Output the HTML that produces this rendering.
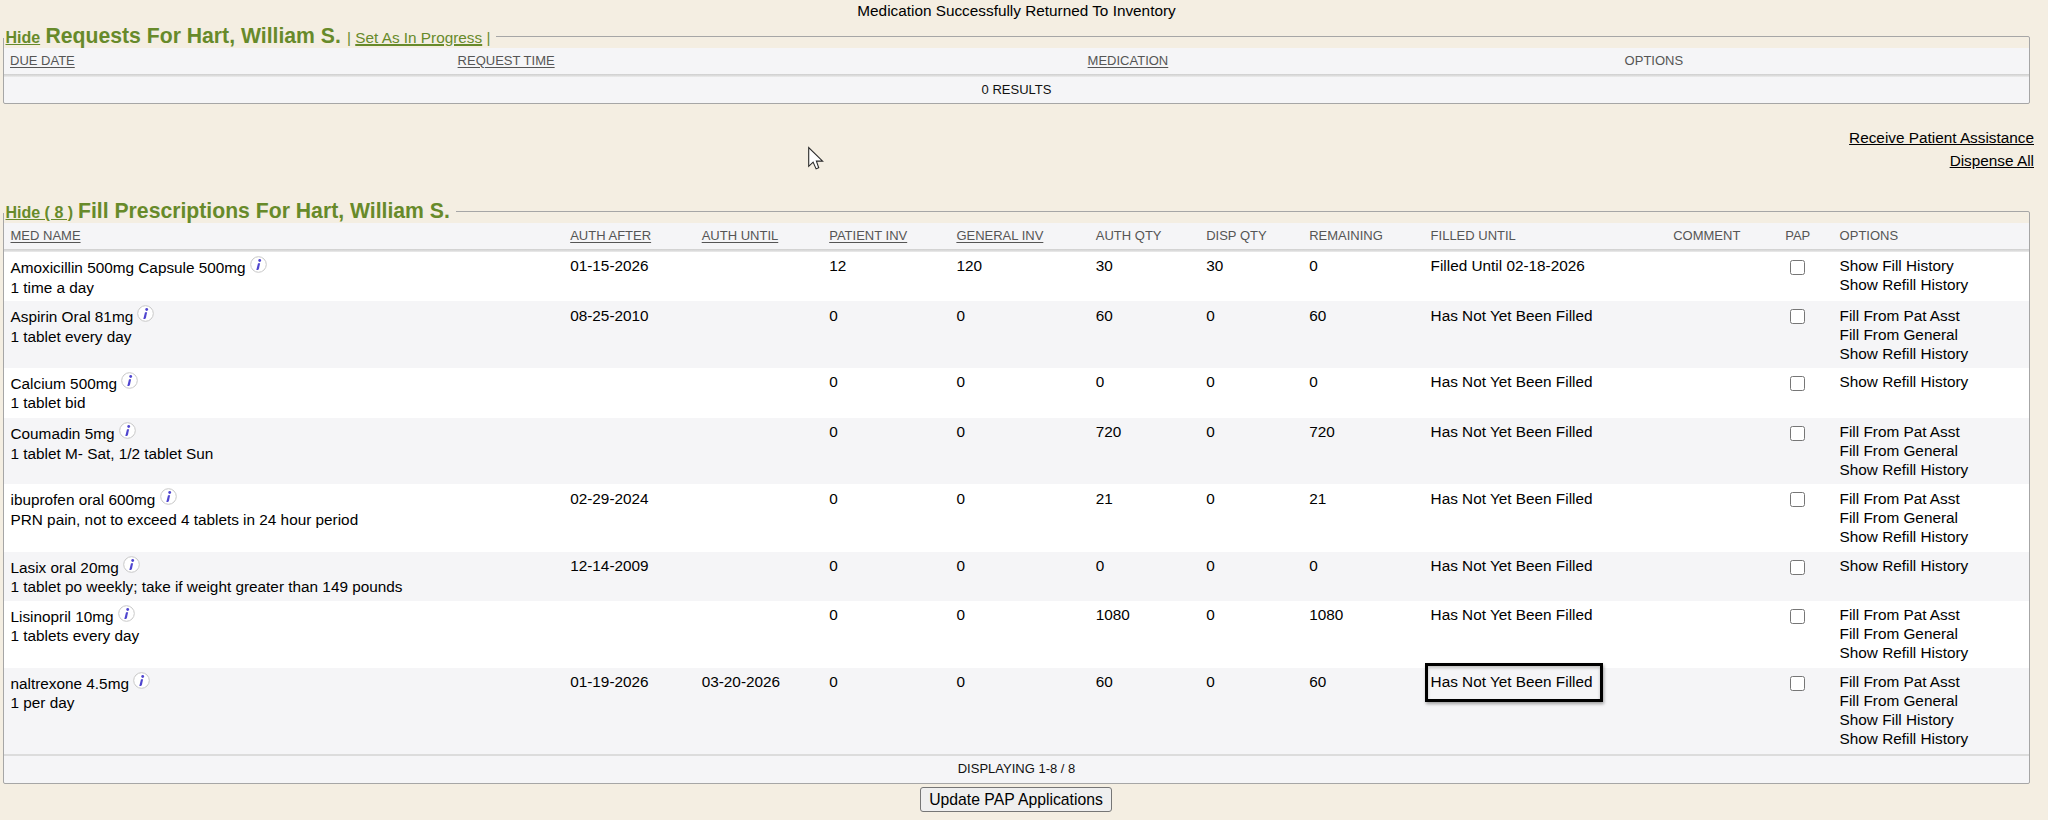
<!DOCTYPE html>
<html><head><meta charset="utf-8"><style>
html,body{margin:0;padding:0;}
body{width:2048px;height:820px;background:#f4eee2;position:relative;overflow:hidden;font-family:"Liberation Sans",sans-serif;}
.t{position:absolute;z-index:5;white-space:nowrap;font-family:"Liberation Sans",sans-serif;}
.r{position:absolute;box-sizing:content-box;}
.ic{display:block;}
.fs{position:absolute;z-index:3;border:1px solid #a6a6a6;border-radius:2px;box-sizing:border-box;}
.cb{width:13px;height:13px;border:1px solid #767676;border-radius:2.5px;background:#fff;}
.btn{position:absolute;border:1px solid #767676;border-radius:3px;background:#efefef;}
</style></head><body>
<div class="t" style="left:0px;top:1.00px;font-size:15.33px;line-height:19px;color:#000000;width:2033px;text-align:center;">Medication Successfully Returned To Inventory</div>
<div class="t" style="left:5.5px;top:28.10px;font-size:16px;line-height:20px;color:#678a2a;font-weight:bold;text-decoration:underline;">Hide</div>
<div class="t" style="left:45.5px;top:24.10px;font-size:21.2px;line-height:24px;color:#678a2a;font-weight:bold;">Requests For Hart, William S.</div>
<div class="t" style="left:347px;top:27.60px;font-size:15.33px;line-height:19px;color:#678a2a;">| <u style="text-decoration-thickness:1.5px">Set As In Progress</u> |</div>
<div class="r" style="left:4px;top:48px;width:2025px;height:26px;background:#f5f5f7;"></div>
<div class="r" style="left:4px;top:74px;width:2025px;height:3px;background:linear-gradient(#cfcfcf,#d9d9d9 45%,#ececec);"></div>
<div class="r" style="left:4px;top:77px;width:2025px;height:26px;background:#f5f5f7;"></div>
<div class="t" style="left:10px;top:52.50px;font-size:13px;line-height:16px;color:#555555;text-decoration:underline;text-underline-offset:2px;">DUE DATE</div>
<div class="t" style="left:457.6px;top:52.50px;font-size:13px;line-height:16px;color:#555555;text-decoration:underline;text-underline-offset:2px;">REQUEST TIME</div>
<div class="t" style="left:1087.6px;top:52.50px;font-size:13px;line-height:16px;color:#555555;text-decoration:underline;text-underline-offset:2px;">MEDICATION</div>
<div class="t" style="left:1624.6px;top:52.50px;font-size:13px;line-height:16px;color:#555555;">OPTIONS</div>
<div class="t" style="left:4px;top:82.00px;font-size:13px;line-height:16px;color:#111;width:2025px;text-align:center;">0 RESULTS</div>
<div class="t" style="left:1000px;top:127.80px;font-size:15.33px;line-height:19px;color:#000000;text-decoration:underline;width:1034px;text-align:right;">Receive Patient Assistance</div>
<div class="t" style="left:1000px;top:151.00px;font-size:15.33px;line-height:19px;color:#000000;text-decoration:underline;width:1034px;text-align:right;">Dispense All</div>
<div class="t" style="left:5.5px;top:203.00px;font-size:16px;line-height:20px;color:#678a2a;font-weight:bold;text-decoration:underline;">Hide ( 8 )</div>
<div class="t" style="left:78px;top:199.10px;font-size:21.2px;line-height:24px;color:#678a2a;font-weight:bold;">Fill Prescriptions For Hart, William S.</div>
<div class="r" style="left:4px;top:223px;width:2025px;height:26px;background:#f5f5f7;"></div>
<div class="r" style="left:4px;top:249px;width:2025px;height:3px;background:linear-gradient(#cfcfcf,#d9d9d9 45%,#ececec);"></div>
<div class="t" style="left:10.5px;top:227.50px;font-size:13px;line-height:16px;color:#555555;text-decoration:underline;text-underline-offset:2px;">MED NAME</div>
<div class="t" style="left:570.2px;top:227.50px;font-size:13px;line-height:16px;color:#555555;text-decoration:underline;text-underline-offset:2px;">AUTH AFTER</div>
<div class="t" style="left:701.7px;top:227.50px;font-size:13px;line-height:16px;color:#555555;text-decoration:underline;text-underline-offset:2px;">AUTH UNTIL</div>
<div class="t" style="left:829.2px;top:227.50px;font-size:13px;line-height:16px;color:#555555;text-decoration:underline;text-underline-offset:2px;">PATIENT INV</div>
<div class="t" style="left:956.4px;top:227.50px;font-size:13px;line-height:16px;color:#555555;text-decoration:underline;text-underline-offset:2px;">GENERAL INV</div>
<div class="t" style="left:1095.8px;top:227.50px;font-size:13px;line-height:16px;color:#555555;text-underline-offset:2px;">AUTH QTY</div>
<div class="t" style="left:1206.2px;top:227.50px;font-size:13px;line-height:16px;color:#555555;text-underline-offset:2px;">DISP QTY</div>
<div class="t" style="left:1309.2px;top:227.50px;font-size:13px;line-height:16px;color:#555555;text-underline-offset:2px;">REMAINING</div>
<div class="t" style="left:1430.6px;top:227.50px;font-size:13px;line-height:16px;color:#555555;text-underline-offset:2px;">FILLED UNTIL</div>
<div class="t" style="left:1673.2px;top:227.50px;font-size:13px;line-height:16px;color:#555555;text-underline-offset:2px;">COMMENT</div>
<div class="t" style="left:1785.2px;top:227.50px;font-size:13px;line-height:16px;color:#555555;text-underline-offset:2px;">PAP</div>
<div class="t" style="left:1839.6px;top:227.50px;font-size:13px;line-height:16px;color:#555555;text-underline-offset:2px;">OPTIONS</div>
<div class="r" style="left:4px;top:252px;width:2025px;height:49px;background:#ffffff;"></div>
<div class="t" style="left:10.5px;top:258.30px;font-size:15.33px;line-height:19px;color:#000000;">Amoxicillin 500mg Capsule 500mg</div>
<div class="r" style="left:249.8622px;top:256.19999999999993px;width:17px;height:17px"><svg class="ic" width="17" height="17" viewBox="0 0 17 17"><circle cx="8.5" cy="8.5" r="7.8" fill="#fff" stroke="#c8c8c8" stroke-width="1"/><circle cx="9.7" cy="4.5" r="1.4" fill="#4f45cf"/><path d="M8.0 7.2 L10.1 7.2 L8.9 12.9 L8.1 13.9 L6.3 13.9 Z" fill="#4f45cf"/></svg></div>
<div class="t" style="left:10.5px;top:277.50px;font-size:15.33px;line-height:19px;color:#000000;">1 time a day</div>
<div class="t" style="left:570.2px;top:256.40px;font-size:15.33px;line-height:19px;color:#000000;">01-15-2026</div>
<div class="t" style="left:829.2px;top:256.40px;font-size:15.33px;line-height:19px;color:#000000;">12</div>
<div class="t" style="left:956.4px;top:256.40px;font-size:15.33px;line-height:19px;color:#000000;">120</div>
<div class="t" style="left:1095.8px;top:256.40px;font-size:15.33px;line-height:19px;color:#000000;">30</div>
<div class="t" style="left:1206.2px;top:256.40px;font-size:15.33px;line-height:19px;color:#000000;">30</div>
<div class="t" style="left:1309.2px;top:256.40px;font-size:15.33px;line-height:19px;color:#000000;">0</div>
<div class="t" style="left:1430.6px;top:256.40px;font-size:15.33px;line-height:19px;color:#000000;">Filled Until 02-18-2026</div>
<div class="r cb" style="left:1790px;top:260px;"></div>
<div class="t" style="left:1839.6px;top:256.40px;font-size:15.33px;line-height:19px;color:#000000;">Show Fill History</div>
<div class="t" style="left:1839.6px;top:275.40px;font-size:15.33px;line-height:19px;color:#000000;">Show Refill History</div>
<div class="r" style="left:4px;top:301px;width:2025px;height:67px;background:#f5f5f7;"></div>
<div class="t" style="left:10.5px;top:307.43px;font-size:15.33px;line-height:19px;color:#000000;">Aspirin Oral 81mg</div>
<div class="r" style="left:137.378325px;top:305.3299999999999px;width:17px;height:17px"><svg class="ic" width="17" height="17" viewBox="0 0 17 17"><circle cx="8.5" cy="8.5" r="7.8" fill="#fff" stroke="#c8c8c8" stroke-width="1"/><circle cx="9.7" cy="4.5" r="1.4" fill="#4f45cf"/><path d="M8.0 7.2 L10.1 7.2 L8.9 12.9 L8.1 13.9 L6.3 13.9 Z" fill="#4f45cf"/></svg></div>
<div class="t" style="left:10.5px;top:326.63px;font-size:15.33px;line-height:19px;color:#000000;">1 tablet every day</div>
<div class="t" style="left:570.2px;top:305.53px;font-size:15.33px;line-height:19px;color:#000000;">08-25-2010</div>
<div class="t" style="left:829.2px;top:305.53px;font-size:15.33px;line-height:19px;color:#000000;">0</div>
<div class="t" style="left:956.4px;top:305.53px;font-size:15.33px;line-height:19px;color:#000000;">0</div>
<div class="t" style="left:1095.8px;top:305.53px;font-size:15.33px;line-height:19px;color:#000000;">60</div>
<div class="t" style="left:1206.2px;top:305.53px;font-size:15.33px;line-height:19px;color:#000000;">0</div>
<div class="t" style="left:1309.2px;top:305.53px;font-size:15.33px;line-height:19px;color:#000000;">60</div>
<div class="t" style="left:1430.6px;top:305.53px;font-size:15.33px;line-height:19px;color:#000000;">Has Not Yet Been Filled</div>
<div class="r cb" style="left:1790px;top:309.13px;"></div>
<div class="t" style="left:1839.6px;top:305.53px;font-size:15.33px;line-height:19px;color:#000000;">Fill From Pat Asst</div>
<div class="t" style="left:1839.6px;top:324.53px;font-size:15.33px;line-height:19px;color:#000000;">Fill From General</div>
<div class="t" style="left:1839.6px;top:343.53px;font-size:15.33px;line-height:19px;color:#000000;">Show Refill History</div>
<div class="r" style="left:4px;top:368px;width:2025px;height:50px;background:#ffffff;"></div>
<div class="t" style="left:10.5px;top:374.07px;font-size:15.33px;line-height:19px;color:#000000;">Calcium 500mg</div>
<div class="r" style="left:121.19559375000001px;top:371.9699999999999px;width:17px;height:17px"><svg class="ic" width="17" height="17" viewBox="0 0 17 17"><circle cx="8.5" cy="8.5" r="7.8" fill="#fff" stroke="#c8c8c8" stroke-width="1"/><circle cx="9.7" cy="4.5" r="1.4" fill="#4f45cf"/><path d="M8.0 7.2 L10.1 7.2 L8.9 12.9 L8.1 13.9 L6.3 13.9 Z" fill="#4f45cf"/></svg></div>
<div class="t" style="left:10.5px;top:393.27px;font-size:15.33px;line-height:19px;color:#000000;">1 tablet bid</div>
<div class="t" style="left:829.2px;top:372.17px;font-size:15.33px;line-height:19px;color:#000000;">0</div>
<div class="t" style="left:956.4px;top:372.17px;font-size:15.33px;line-height:19px;color:#000000;">0</div>
<div class="t" style="left:1095.8px;top:372.17px;font-size:15.33px;line-height:19px;color:#000000;">0</div>
<div class="t" style="left:1206.2px;top:372.17px;font-size:15.33px;line-height:19px;color:#000000;">0</div>
<div class="t" style="left:1309.2px;top:372.17px;font-size:15.33px;line-height:19px;color:#000000;">0</div>
<div class="t" style="left:1430.6px;top:372.17px;font-size:15.33px;line-height:19px;color:#000000;">Has Not Yet Been Filled</div>
<div class="r cb" style="left:1790px;top:375.77px;"></div>
<div class="t" style="left:1839.6px;top:372.17px;font-size:15.33px;line-height:19px;color:#000000;">Show Refill History</div>
<div class="r" style="left:4px;top:418px;width:2025px;height:66px;background:#f5f5f7;"></div>
<div class="t" style="left:10.5px;top:424.35px;font-size:15.33px;line-height:19px;color:#000000;">Coumadin 5mg</div>
<div class="r" style="left:118.64937656250001px;top:422.24999999999994px;width:17px;height:17px"><svg class="ic" width="17" height="17" viewBox="0 0 17 17"><circle cx="8.5" cy="8.5" r="7.8" fill="#fff" stroke="#c8c8c8" stroke-width="1"/><circle cx="9.7" cy="4.5" r="1.4" fill="#4f45cf"/><path d="M8.0 7.2 L10.1 7.2 L8.9 12.9 L8.1 13.9 L6.3 13.9 Z" fill="#4f45cf"/></svg></div>
<div class="t" style="left:10.5px;top:443.55px;font-size:15.33px;line-height:19px;color:#000000;">1 tablet M- Sat, 1/2 tablet Sun</div>
<div class="t" style="left:829.2px;top:422.45px;font-size:15.33px;line-height:19px;color:#000000;">0</div>
<div class="t" style="left:956.4px;top:422.45px;font-size:15.33px;line-height:19px;color:#000000;">0</div>
<div class="t" style="left:1095.8px;top:422.45px;font-size:15.33px;line-height:19px;color:#000000;">720</div>
<div class="t" style="left:1206.2px;top:422.45px;font-size:15.33px;line-height:19px;color:#000000;">0</div>
<div class="t" style="left:1309.2px;top:422.45px;font-size:15.33px;line-height:19px;color:#000000;">720</div>
<div class="t" style="left:1430.6px;top:422.45px;font-size:15.33px;line-height:19px;color:#000000;">Has Not Yet Been Filled</div>
<div class="r cb" style="left:1790px;top:426.05px;"></div>
<div class="t" style="left:1839.6px;top:422.45px;font-size:15.33px;line-height:19px;color:#000000;">Fill From Pat Asst</div>
<div class="t" style="left:1839.6px;top:441.45px;font-size:15.33px;line-height:19px;color:#000000;">Fill From General</div>
<div class="t" style="left:1839.6px;top:460.45px;font-size:15.33px;line-height:19px;color:#000000;">Show Refill History</div>
<div class="r" style="left:4px;top:484px;width:2025px;height:68px;background:#ffffff;"></div>
<div class="t" style="left:10.5px;top:490.43px;font-size:15.33px;line-height:19px;color:#000000;">ibuprofen oral 600mg</div>
<div class="r" style="left:159.56610468749997px;top:488.3299999999999px;width:17px;height:17px"><svg class="ic" width="17" height="17" viewBox="0 0 17 17"><circle cx="8.5" cy="8.5" r="7.8" fill="#fff" stroke="#c8c8c8" stroke-width="1"/><circle cx="9.7" cy="4.5" r="1.4" fill="#4f45cf"/><path d="M8.0 7.2 L10.1 7.2 L8.9 12.9 L8.1 13.9 L6.3 13.9 Z" fill="#4f45cf"/></svg></div>
<div class="t" style="left:10.5px;top:509.63px;font-size:15.33px;line-height:19px;color:#000000;">PRN pain, not to exceed 4 tablets in 24 hour period</div>
<div class="t" style="left:570.2px;top:488.53px;font-size:15.33px;line-height:19px;color:#000000;">02-29-2024</div>
<div class="t" style="left:829.2px;top:488.53px;font-size:15.33px;line-height:19px;color:#000000;">0</div>
<div class="t" style="left:956.4px;top:488.53px;font-size:15.33px;line-height:19px;color:#000000;">0</div>
<div class="t" style="left:1095.8px;top:488.53px;font-size:15.33px;line-height:19px;color:#000000;">21</div>
<div class="t" style="left:1206.2px;top:488.53px;font-size:15.33px;line-height:19px;color:#000000;">0</div>
<div class="t" style="left:1309.2px;top:488.53px;font-size:15.33px;line-height:19px;color:#000000;">21</div>
<div class="t" style="left:1430.6px;top:488.53px;font-size:15.33px;line-height:19px;color:#000000;">Has Not Yet Been Filled</div>
<div class="r cb" style="left:1790px;top:492.13px;"></div>
<div class="t" style="left:1839.6px;top:488.53px;font-size:15.33px;line-height:19px;color:#000000;">Fill From Pat Asst</div>
<div class="t" style="left:1839.6px;top:507.53px;font-size:15.33px;line-height:19px;color:#000000;">Fill From General</div>
<div class="t" style="left:1839.6px;top:526.53px;font-size:15.33px;line-height:19px;color:#000000;">Show Refill History</div>
<div class="r" style="left:4px;top:552px;width:2025px;height:49px;background:#f5f5f7;"></div>
<div class="t" style="left:10.5px;top:557.80px;font-size:15.33px;line-height:19px;color:#000000;">Lasix oral 20mg</div>
<div class="r" style="left:122.90824218750001px;top:555.6999999999999px;width:17px;height:17px"><svg class="ic" width="17" height="17" viewBox="0 0 17 17"><circle cx="8.5" cy="8.5" r="7.8" fill="#fff" stroke="#c8c8c8" stroke-width="1"/><circle cx="9.7" cy="4.5" r="1.4" fill="#4f45cf"/><path d="M8.0 7.2 L10.1 7.2 L8.9 12.9 L8.1 13.9 L6.3 13.9 Z" fill="#4f45cf"/></svg></div>
<div class="t" style="left:10.5px;top:577.00px;font-size:15.33px;line-height:19px;color:#000000;">1 tablet po weekly; take if weight greater than 149 pounds</div>
<div class="t" style="left:570.2px;top:555.90px;font-size:15.33px;line-height:19px;color:#000000;">12-14-2009</div>
<div class="t" style="left:829.2px;top:555.90px;font-size:15.33px;line-height:19px;color:#000000;">0</div>
<div class="t" style="left:956.4px;top:555.90px;font-size:15.33px;line-height:19px;color:#000000;">0</div>
<div class="t" style="left:1095.8px;top:555.90px;font-size:15.33px;line-height:19px;color:#000000;">0</div>
<div class="t" style="left:1206.2px;top:555.90px;font-size:15.33px;line-height:19px;color:#000000;">0</div>
<div class="t" style="left:1309.2px;top:555.90px;font-size:15.33px;line-height:19px;color:#000000;">0</div>
<div class="t" style="left:1430.6px;top:555.90px;font-size:15.33px;line-height:19px;color:#000000;">Has Not Yet Been Filled</div>
<div class="r cb" style="left:1790px;top:559.5px;"></div>
<div class="t" style="left:1839.6px;top:555.90px;font-size:15.33px;line-height:19px;color:#000000;">Show Refill History</div>
<div class="r" style="left:4px;top:601px;width:2025px;height:67px;background:#ffffff;"></div>
<div class="t" style="left:10.5px;top:606.90px;font-size:15.33px;line-height:19px;color:#000000;">Lisinopril 10mg</div>
<div class="r" style="left:117.7966453125px;top:604.8px;width:17px;height:17px"><svg class="ic" width="17" height="17" viewBox="0 0 17 17"><circle cx="8.5" cy="8.5" r="7.8" fill="#fff" stroke="#c8c8c8" stroke-width="1"/><circle cx="9.7" cy="4.5" r="1.4" fill="#4f45cf"/><path d="M8.0 7.2 L10.1 7.2 L8.9 12.9 L8.1 13.9 L6.3 13.9 Z" fill="#4f45cf"/></svg></div>
<div class="t" style="left:10.5px;top:626.10px;font-size:15.33px;line-height:19px;color:#000000;">1 tablets every day</div>
<div class="t" style="left:829.2px;top:605.00px;font-size:15.33px;line-height:19px;color:#000000;">0</div>
<div class="t" style="left:956.4px;top:605.00px;font-size:15.33px;line-height:19px;color:#000000;">0</div>
<div class="t" style="left:1095.8px;top:605.00px;font-size:15.33px;line-height:19px;color:#000000;">1080</div>
<div class="t" style="left:1206.2px;top:605.00px;font-size:15.33px;line-height:19px;color:#000000;">0</div>
<div class="t" style="left:1309.2px;top:605.00px;font-size:15.33px;line-height:19px;color:#000000;">1080</div>
<div class="t" style="left:1430.6px;top:605.00px;font-size:15.33px;line-height:19px;color:#000000;">Has Not Yet Been Filled</div>
<div class="r cb" style="left:1790px;top:608.6px;"></div>
<div class="t" style="left:1839.6px;top:605.00px;font-size:15.33px;line-height:19px;color:#000000;">Fill From Pat Asst</div>
<div class="t" style="left:1839.6px;top:624.00px;font-size:15.33px;line-height:19px;color:#000000;">Fill From General</div>
<div class="t" style="left:1839.6px;top:643.00px;font-size:15.33px;line-height:19px;color:#000000;">Show Refill History</div>
<div class="r" style="left:4px;top:668px;width:2025px;height:86px;background:#f5f5f7;"></div>
<div class="t" style="left:10.5px;top:673.80px;font-size:15.33px;line-height:19px;color:#000000;">naltrexone 4.5mg</div>
<div class="r" style="left:133.14580781249998px;top:671.6999999999999px;width:17px;height:17px"><svg class="ic" width="17" height="17" viewBox="0 0 17 17"><circle cx="8.5" cy="8.5" r="7.8" fill="#fff" stroke="#c8c8c8" stroke-width="1"/><circle cx="9.7" cy="4.5" r="1.4" fill="#4f45cf"/><path d="M8.0 7.2 L10.1 7.2 L8.9 12.9 L8.1 13.9 L6.3 13.9 Z" fill="#4f45cf"/></svg></div>
<div class="t" style="left:10.5px;top:693.00px;font-size:15.33px;line-height:19px;color:#000000;">1 per day</div>
<div class="t" style="left:570.2px;top:671.90px;font-size:15.33px;line-height:19px;color:#000000;">01-19-2026</div>
<div class="t" style="left:701.7px;top:671.90px;font-size:15.33px;line-height:19px;color:#000000;">03-20-2026</div>
<div class="t" style="left:829.2px;top:671.90px;font-size:15.33px;line-height:19px;color:#000000;">0</div>
<div class="t" style="left:956.4px;top:671.90px;font-size:15.33px;line-height:19px;color:#000000;">0</div>
<div class="t" style="left:1095.8px;top:671.90px;font-size:15.33px;line-height:19px;color:#000000;">60</div>
<div class="t" style="left:1206.2px;top:671.90px;font-size:15.33px;line-height:19px;color:#000000;">0</div>
<div class="t" style="left:1309.2px;top:671.90px;font-size:15.33px;line-height:19px;color:#000000;">60</div>
<div class="t" style="left:1430.6px;top:671.90px;font-size:15.33px;line-height:19px;color:#000000;">Has Not Yet Been Filled</div>
<div class="r cb" style="left:1790px;top:675.5px;"></div>
<div class="t" style="left:1839.6px;top:671.90px;font-size:15.33px;line-height:19px;color:#000000;">Fill From Pat Asst</div>
<div class="t" style="left:1839.6px;top:690.90px;font-size:15.33px;line-height:19px;color:#000000;">Fill From General</div>
<div class="t" style="left:1839.6px;top:709.90px;font-size:15.33px;line-height:19px;color:#000000;">Show Fill History</div>
<div class="t" style="left:1839.6px;top:728.90px;font-size:15.33px;line-height:19px;color:#000000;">Show Refill History</div>
<div class="r" style="left:4px;top:754px;width:2025px;height:2px;background:#dcdcdc;"></div>
<div class="r" style="left:4px;top:756px;width:2025px;height:27px;background:#f5f5f7;"></div>
<div class="t" style="left:4px;top:760.50px;font-size:13px;line-height:16px;color:#111;width:2025px;text-align:center;">DISPLAYING 1-8 / 8</div>
<div class="r" style="left:1425px;top:663px;width:172px;height:32.5px;border:3px solid #000;box-shadow:1px 2px 3px rgba(0,0,0,.35), inset 0 2px 3px rgba(0,0,0,.25);"></div>
<div class="btn" style="left:920px;top:787px;width:190px;height:23px;"></div>
<div class="t" style="left:920px;top:789.50px;font-size:15.75px;line-height:19px;color:#000000;width:192px;text-align:center;">Update PAP Applications</div>
<svg class="r" style="left:800px;top:140px;z-index:9" width="30" height="34" viewBox="0 0 30 34"><path d="M8.7 7.6 L8.7 26.3 L13.1 22.1 L16.1 28.9 L18.7 27.8 L16.4 21.1 L22.6 21.1 Z" fill="#fff" stroke="#2a2a2a" stroke-width="1.1" stroke-linejoin="miter"/></svg>
<div class="fs" style="left:3px;top:36px;width:2027px;height:68px;"></div>
<div class="r" style="z-index:4;left:2px;top:35px;width:494px;height:3px;background:#f4eee2"></div>
<div class="fs" style="left:3px;top:211px;width:2027px;height:573px;"></div>
<div class="r" style="z-index:4;left:2px;top:210px;width:454px;height:3px;background:#f4eee2"></div>
</body></html>
